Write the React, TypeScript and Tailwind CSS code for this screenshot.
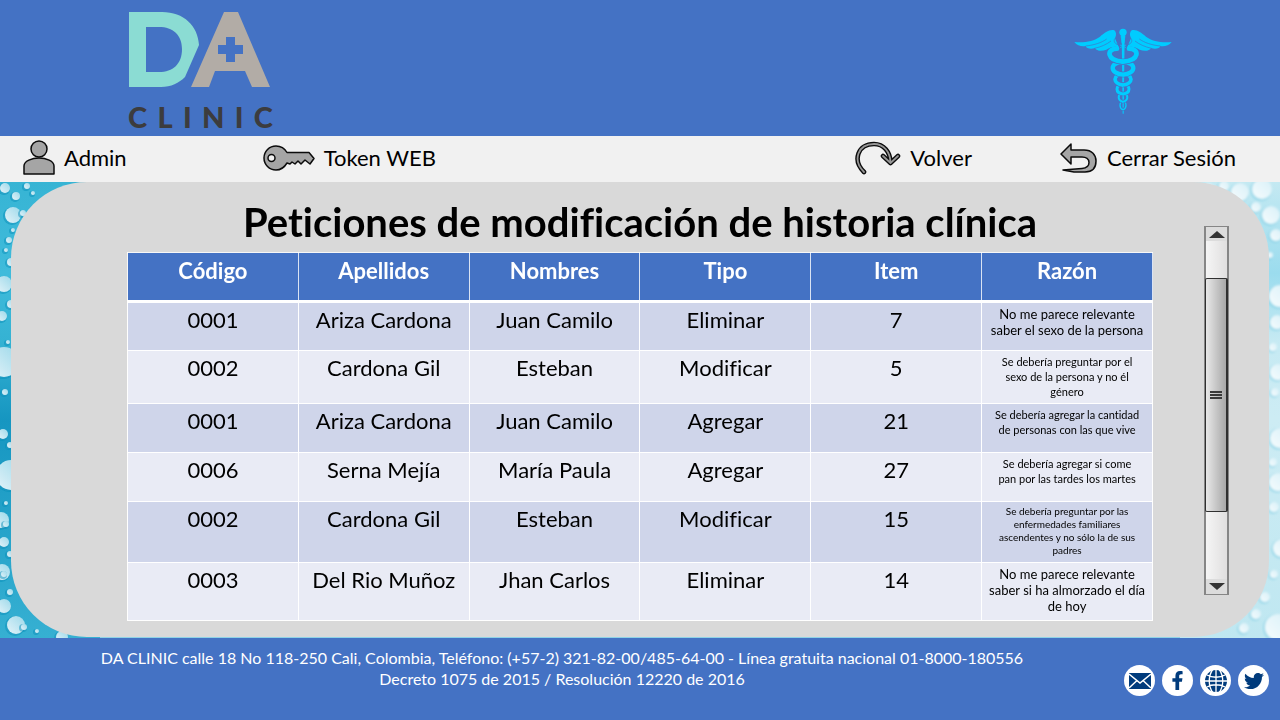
import React from "react";
import { FaFacebookF, FaTwitter } from "react-icons/fa";

type Row = {
  code: string;
  surname: string;
  name: string;
  kind: string;
  item: string;
  reason: string[];
  rowClass: string;
  reasonClass: string;
};

const columns = ["Código", "Apellidos", "Nombres", "Tipo", "Item", "Razón"];

const large = "text-[13px] leading-[16px]";
const medium = "text-[11px] leading-[15px]";
const small = "text-[10px] leading-[13px]";

const rows: Row[] = [
  { code: "0001", surname: "Ariza Cardona", name: "Juan Camilo", kind: "Eliminar", item: "7", reason: ["No me parece relevante", "saber el sexo de la persona"], rowClass: "h-[49px] bg-[#cfd5ea]", reasonClass: large },
  { code: "0002", surname: "Cardona Gil", name: "Esteban", kind: "Modificar", item: "5", reason: ["Se debería preguntar por el", "sexo de la persona y no él", "género"], rowClass: "h-[53px] bg-[#e9ebf5]", reasonClass: medium },
  { code: "0001", surname: "Ariza Cardona", name: "Juan Camilo", kind: "Agregar", item: "21", reason: ["Se debería agregar la cantidad", "de personas con las que vive"], rowClass: "h-[49px] bg-[#cfd5ea]", reasonClass: medium },
  { code: "0006", surname: "Serna Mejía", name: "María Paula", kind: "Agregar", item: "27", reason: ["Se debería agregar si come", "pan por las tardes los martes"], rowClass: "h-[49px] bg-[#e9ebf5]", reasonClass: medium },
  { code: "0002", surname: "Cardona Gil", name: "Esteban", kind: "Modificar", item: "15", reason: ["Se debería preguntar por las", "enfermedades familiares", "ascendentes y no sólo la de sus", "padres"], rowClass: "h-[61px] bg-[#cfd5ea]", reasonClass: small },
  { code: "0003", surname: "Del Rio Muñoz", name: "Jhan Carlos", kind: "Eliminar", item: "14", reason: ["No me parece relevante", "saber si ha almorzado el día", "de hoy"], rowClass: "h-[58px] bg-[#e9ebf5]", reasonClass: large },
];

function Logo() {
  return (
    <div className="flex w-[145px] flex-col">
      <svg viewBox="0 0 145 78" className="h-[78px] w-[145px]" role="img" aria-label="DA">
        <path d="M1 1H34C56 1 70 15 71 34L57 66C51 72 43 76 33 76H1ZM18 16V61H31C45 61 54 53 54 38C54 24 45 16 31 16Z" fill="#8bdcd3" fillRule="evenodd" />
        <path d="M96 1H110L142 76H124L117 60H87L81 76H63Z" fill="#b2aca6" />
        <path d="M98 26H107V34H115V43H107V51H98V43H90V34H98Z" fill="#4472c4" />
      </svg>
      <div className="mt-[14px] flex justify-between text-[29px] leading-[28px] font-black text-[#3c3c3e]" aria-label="Clinic">
        {"CLINIC".split("").map((letter, i) => (
          <span key={i}>{letter}</span>
        ))}
      </div>
    </div>
  );
}

const coils = [
  { y: 119, rx: 38, ry: 21, w: 14 },
  { y: 160, rx: 31, ry: 19, w: 13 },
  { y: 194, rx: 24, ry: 16, w: 11 },
  { y: 223, rx: 18, ry: 14, w: 9 },
  { y: 248, rx: 13, ry: 12, w: 6 },
  { y: 272, rx: 9, ry: 12, w: 4 },
];

function Coil({ side, index }: { side: 1 | -1; index: number }) {
  const c = coils[index];
  const x = 190 + side * c.rx * 1.33;
  const top = index === 0 ? 101 : c.y - c.ry;
  const bottom = c.y + c.ry;
  const start = index === 0 ? 190 + side * 18 : 190;
  const d = `M${start} ${top}C${x} ${top} ${x} ${bottom - 3} 190 ${bottom}`;
  return (
    <g fill="none">
      <path d={d} stroke="#4472c4" strokeWidth={c.w + 4} />
      <path d={d} stroke="#00ccff" strokeWidth={c.w} strokeLinecap="round" />
    </g>
  );
}

function Wing() {
  return (
    <g>
      <path d="M178 98L166 70C171 60 170 51 164 46C150 42 135 53 121 65C102 79 74 84 44 81C52 92 66 95 78 93C80 101 94 103 106 99C110 108 126 110 140 104C152 97 166 92 178 98Z" fill="#00ccff" />
      <path d="M78 93C105 90 126 83 141 72M104 100C124 96 141 88 154 78M166 70C160 78 166 90 182 90" fill="none" stroke="#4472c4" strokeWidth="2" />
    </g>
  );
}

function Caduceus() {
  return (
    <svg viewBox="40 36 300 264" className="h-[88px] w-[100px]" role="img" aria-label="Caduceo">
      <path d="M186 60H195L192 296H189Z" fill="#00ccff" />
      {coils
        .map((_, i) => (
          <g key={i}>
            <Coil side={i % 2 ? 1 : -1} index={i} />
            <Coil side={i % 2 ? -1 : 1} index={i} />
          </g>
        ))
        .reverse()}
      <Wing />
      <g transform="translate(380 0) scale(-1 1)">
        <Wing />
      </g>
      <path d="M184 62H196L193 84H187ZM181 90L199 98M199 90L181 98" fill="#00ccff" stroke="#00ccff" strokeWidth="2" />
      <circle cx="190" cy="52" r="11" fill="#00ccff" />
    </svg>
  );
}

const outline = { fill: "#a5a5a5", stroke: "#0b0b0b", strokeWidth: 1.5, strokeLinejoin: "round" as const };

function NavLink({ label, children }: { label: string; children: React.ReactNode }) {
  return (
    <a href="#" className="flex items-center gap-[9px] text-[22px] leading-[28px] text-black">
      {children}
      <span>{label}</span>
    </a>
  );
}

function PersonIcon() {
  return (
    <svg viewBox="0 0 32 36" className="h-[36px] w-[32px]" aria-hidden="true">
      <circle cx="16" cy="9" r="8" {...outline} />
      <path d="M1 34V26C1 21 9 18 16 18S31 21 31 26V34Z" {...outline} />
    </svg>
  );
}

function KeyIcon() {
  return (
    <svg viewBox="0 0 52 26" className="h-[26px] w-[52px]" aria-hidden="true">
      <path d="M24 7.500H46L51 13.500L47 19L42 15L38 19L35 16L32 19L29 17L27 19L24 18C21 23 17 25 13 25A12 12 0 1 1 13 1C18 1 22 4 24 7.500Z" {...outline} />
      <circle cx="8.500" cy="13" r="3.500" {...outline} fill="#f1f1f1" />
    </svg>
  );
}

function RedoIcon() {
  return (
    <svg viewBox="0 0 46 34" className="h-[34px] w-[46px]" aria-hidden="true">
      <path d="M9 31C-3 19 3 3 19 3C29 3 35 11 35.500 21M28 15L35.500 22L43 15" fill="none" stroke="#0b0b0b" strokeWidth="4.600" strokeLinecap="round" strokeLinejoin="round" />
      <path d="M9 31C-3 19 3 3 19 3C29 3 35 11 35.500 21M28 15L35.500 22L43 15" fill="none" stroke="#969696" strokeWidth="1.800" strokeLinecap="round" strokeLinejoin="round" />
    </svg>
  );
}

function ReturnIcon() {
  return (
    <svg viewBox="0 0 38 32" className="h-[32px] w-[38px]" aria-hidden="true">
      <path d="M1 12L11 2V8H24C32 8 36 13 36 19C36 26 32 30 25 30H14L3 28L22 26.500C27 26 29 24 29 20.500C29 17 26 15 22 15H11V22Z" {...outline} />
    </svg>
  );
}

function MailIcon() {
  return (
    <svg viewBox="0 0 22 16" className="h-[16px] w-[22px]" aria-hidden="true">
      <path d="M0 0H22V16H0Z" fill="#003b7c" />
      <path d="M0 1L11 10L22 1M0 15L8 7.500M22 15L14 7.500" fill="none" stroke="white" strokeWidth="1.500" />
    </svg>
  );
}

function GlobeIcon() {
  return (
    <svg viewBox="0 0 24 24" className="h-[24px] w-[24px]" aria-hidden="true">
      <circle cx="12" cy="12" r="11" fill="#003b7c" />
      <path d="M12 0V24M0 12H24M3 6C8 9 16 9 21 6M3 18C8 15 16 15 21 18M9 0C4 7 4 17 9 24M15 0C20 7 20 17 15 24" fill="none" stroke="white" strokeWidth="1.300" />
    </svg>
  );
}

type Drop = [number, number, number];

const leftDrops: Drop[] = [
  [5, 6, 5], [27, 4, 3], [16, 14, 4], [33, 11, 2], [13, 33, 8], [23, 31, 3], [13, 48, 2], [9, 58, 3], [6, 68, 2], [11, 80, 4],
  [4, 102, 8], [11, 122, 4], [2, 134, 5], [8, 160, 2], [4, 180, 15], [5, 210, 3], [3, 252, 5], [10, 263, 3], [11, 293, 15], [6, 321, 2],
  [1, 338, 8], [6, 342, 3], [4, 360, 5], [10, 372, 3], [2, 390, 8], [4, 392, 3], [10, 410, 3], [4, 424, 7], [16, 443, 9], [24, 445, 3], [37, 449, 2], [62, 455, 6],
];

const rightDrops: Drop[] = [
  [28, 8, 7], [44, 4, 5], [60, 10, 9], [82, 7, 10], [76, 25, 5], [91, 33, 9], [96, 53, 6], [90, 73, 3], [100, 114, 11],
  [97, 140, 7], [93, 165, 4], [98, 190, 8], [95, 210, 4], [100, 256, 10], [93, 280, 4], [98, 300, 9], [94, 325, 5], [102, 366, 9],
  [94, 392, 4], [85, 415, 5], [76, 432, 5], [64, 446, 5], [98, 445, 13],
];

function Drops({ side, drops }: { side: "left" | "right"; drops: Drop[] }) {
  const left = side === "left";
  return (
    <svg
      viewBox="0 0 100 456"
      preserveAspectRatio="none"
      className={left ? "absolute top-0 left-0 h-full w-[100px]" : "absolute top-0 right-0 h-full w-[100px]"}
      aria-hidden="true"
    >
      <defs>
        <linearGradient id={`${side}-drop`} x1="1" y1="0" x2="0" y2="1">
          <stop offset="0" stopColor={left ? "#9dd9ea" : "#d8f0f7"} />
          <stop offset="1" stopColor={left ? "#e4f3f9" : "#f6fcfe"} />
        </linearGradient>
        <linearGradient id={`${side}-water`} x1="0" y1="0" x2="0" y2="1">
          <stop offset="0" stopColor={left ? "#37b4d4" : "#c4e9f2"} />
          <stop offset="0.2" stopColor={left ? "#3fbbdb" : "#9bdcee"} />
          <stop offset="0.35" stopColor={left ? "#35b2d3" : "#c6eaf3"} />
          <stop offset="0.52" stopColor={left ? "#1696c1" : "#cdecf4"} />
          <stop offset="1" stopColor={left ? "#36b0d2" : "#bfe7f1"} />
        </linearGradient>
        <filter id={`${side}-soft`}>
          <feGaussianBlur stdDeviation={left ? 0.7 : 1.3} />
        </filter>
      </defs>
      <rect width="100" height="456" fill={`url(#${side}-water)`} />
      <g filter={`url(#${side}-soft)`}>
        {drops.map(([x, y, r], i) => (
          <g key={i}>
            <circle cx={x - 1} cy={y + 1} r={r + 1} fill={left ? "#0d8fb9" : "#7ccde4"} opacity="0.5" />
            <circle cx={x} cy={y} r={r} fill={`url(#${side}-drop)`} />
          </g>
        ))}
      </g>
    </svg>
  );
}

function Scrollbar() {
  return (
    <div className="flex w-[25px] flex-col border border-x-2 border-[#868686] bg-gradient-to-r from-[#f5f5f5] to-[#e0dfdf]">
      <button type="button" aria-label="Subir" className="flex h-[14px] items-center justify-center bg-[#dcdcdc]">
        <svg viewBox="0 0 16 7" className="h-[7px] w-[16px]" aria-hidden="true">
          <path d="M0 7L8 0L16 7Z" fill="#333333" />
        </svg>
      </button>
      <div className="h-[37px]" />
      <div className="-mx-px flex flex-1 flex-col items-center justify-center gap-px rounded-[2px] border border-r-2 border-[#303030] bg-gradient-to-r from-[#e8e8e8] to-[#a8a8a8]">
        <span className="h-[2px] w-[12px] bg-[#3a3a3a]" />
        <span className="h-[2px] w-[12px] bg-[#3a3a3a]" />
        <span className="h-[2px] w-[12px] bg-[#3a3a3a]" />
      </div>
      <div className="h-[67px]" />
      <button type="button" aria-label="Bajar" className="flex h-[15px] items-center justify-center bg-[#dcdcdc]">
        <svg viewBox="0 0 16 7" className="h-[7px] w-[16px]" aria-hidden="true">
          <path d="M0 0H16L8 7Z" fill="#333333" />
        </svg>
      </button>
    </div>
  );
}

const badge = "flex h-[31px] w-[31px] items-center justify-center rounded-full bg-white text-[#003b7c]";

export default function App() {
  return (
    <div className="flex min-h-screen flex-col bg-[#4472c4] font-['Lato',sans-serif] text-black [font-variant-ligatures:none]">
      <header className="flex h-[136px] items-start justify-between pt-[11px] pr-[107px] pl-[128px]">
        <Logo />
        <div className="pt-[16px]">
          <Caduceus />
        </div>
      </header>

      <nav className="flex h-[46px] items-center justify-between bg-[#f1f1f1] pr-[44px] pb-[2px] pl-[23px]">
        <div className="flex gap-[136px]">
          <NavLink label="Admin"><PersonIcon /></NavLink>
          <NavLink label="Token WEB"><KeyIcon /></NavLink>
        </div>
        <div className="flex gap-[88px]">
          <NavLink label="Volver"><RedoIcon /></NavLink>
          <NavLink label="Cerrar Sesión"><ReturnIcon /></NavLink>
        </div>
      </nav>

      <main className="relative flex-1 bg-[#8fd3e6] px-[11px] pb-px">
        <Drops side="left" drops={leftDrops} />
        <Drops side="right" drops={rightDrops} />
        <section className="relative grid h-full grid-cols-[116px_1fr_116px] rounded-[76px] bg-[#d9d9d9] pb-[16px]">
          <div className="col-start-2 pt-[16px]">
            <h1 className="text-center text-[40px] leading-[48px] font-bold whitespace-nowrap">Peticiones de modificación de historia clínica</h1>
            <table className="mt-[6px] w-full table-fixed border-collapse text-center">
              <thead>
                <tr className="h-[49px] bg-[#4472c4] text-white">
                  {columns.map((c) => (
                    <th key={c} scope="col" className="border border-b-3 border-white/80 border-b-white p-0 pt-[4px] align-top text-[22px] leading-[28px] font-bold">{c}</th>
                  ))}
                </tr>
              </thead>
              <tbody className="text-[22px] leading-[28px]">
                {rows.map((r, i) => (
                  <tr key={i} className={r.rowClass}>
                    {[r.code, r.surname, r.name, r.kind, r.item].map((v, j) => (
                      <td key={j} className="border border-white p-0 pt-[3px] align-top whitespace-nowrap">{v}</td>
                    ))}
                    <td className={`border border-white p-0 pt-[3px] align-top whitespace-nowrap ${r.reasonClass}`}>
                      {r.reason.map((line) => (
                        <span key={line} className="block">{line}</span>
                      ))}
                    </td>
                  </tr>
                ))}
              </tbody>
            </table>
          </div>
          <div className="flex pt-[44px] pb-[26px] pl-[51px]">
            <Scrollbar />
          </div>
        </section>
      </main>

      <footer className="flex h-[82px] justify-between pr-[11px] text-white">
        <p className="flex-1 pt-[9px] text-center text-[16px] leading-[21px]">
          DA CLINIC calle 18 No 118-250 Cali, Colombia, Teléfono: (+57-2) 321-82-00/485-64-00 - Línea gratuita nacional 01-8000-180556
          <br />
          Decreto 1075 de 2015 / Resolución 12220 de 2016
        </p>
        <div className="flex gap-[7px] pt-[27px]">
          <a href="#" aria-label="Correo" className={badge}><MailIcon /></a>
          <a href="#" aria-label="Facebook" className={badge}><FaFacebookF size={19} /></a>
          <a href="#" aria-label="Sitio web" className={badge}><GlobeIcon /></a>
          <a href="#" aria-label="Twitter" className={badge}><FaTwitter size={20} /></a>
        </div>
      </footer>
    </div>
  );
}
